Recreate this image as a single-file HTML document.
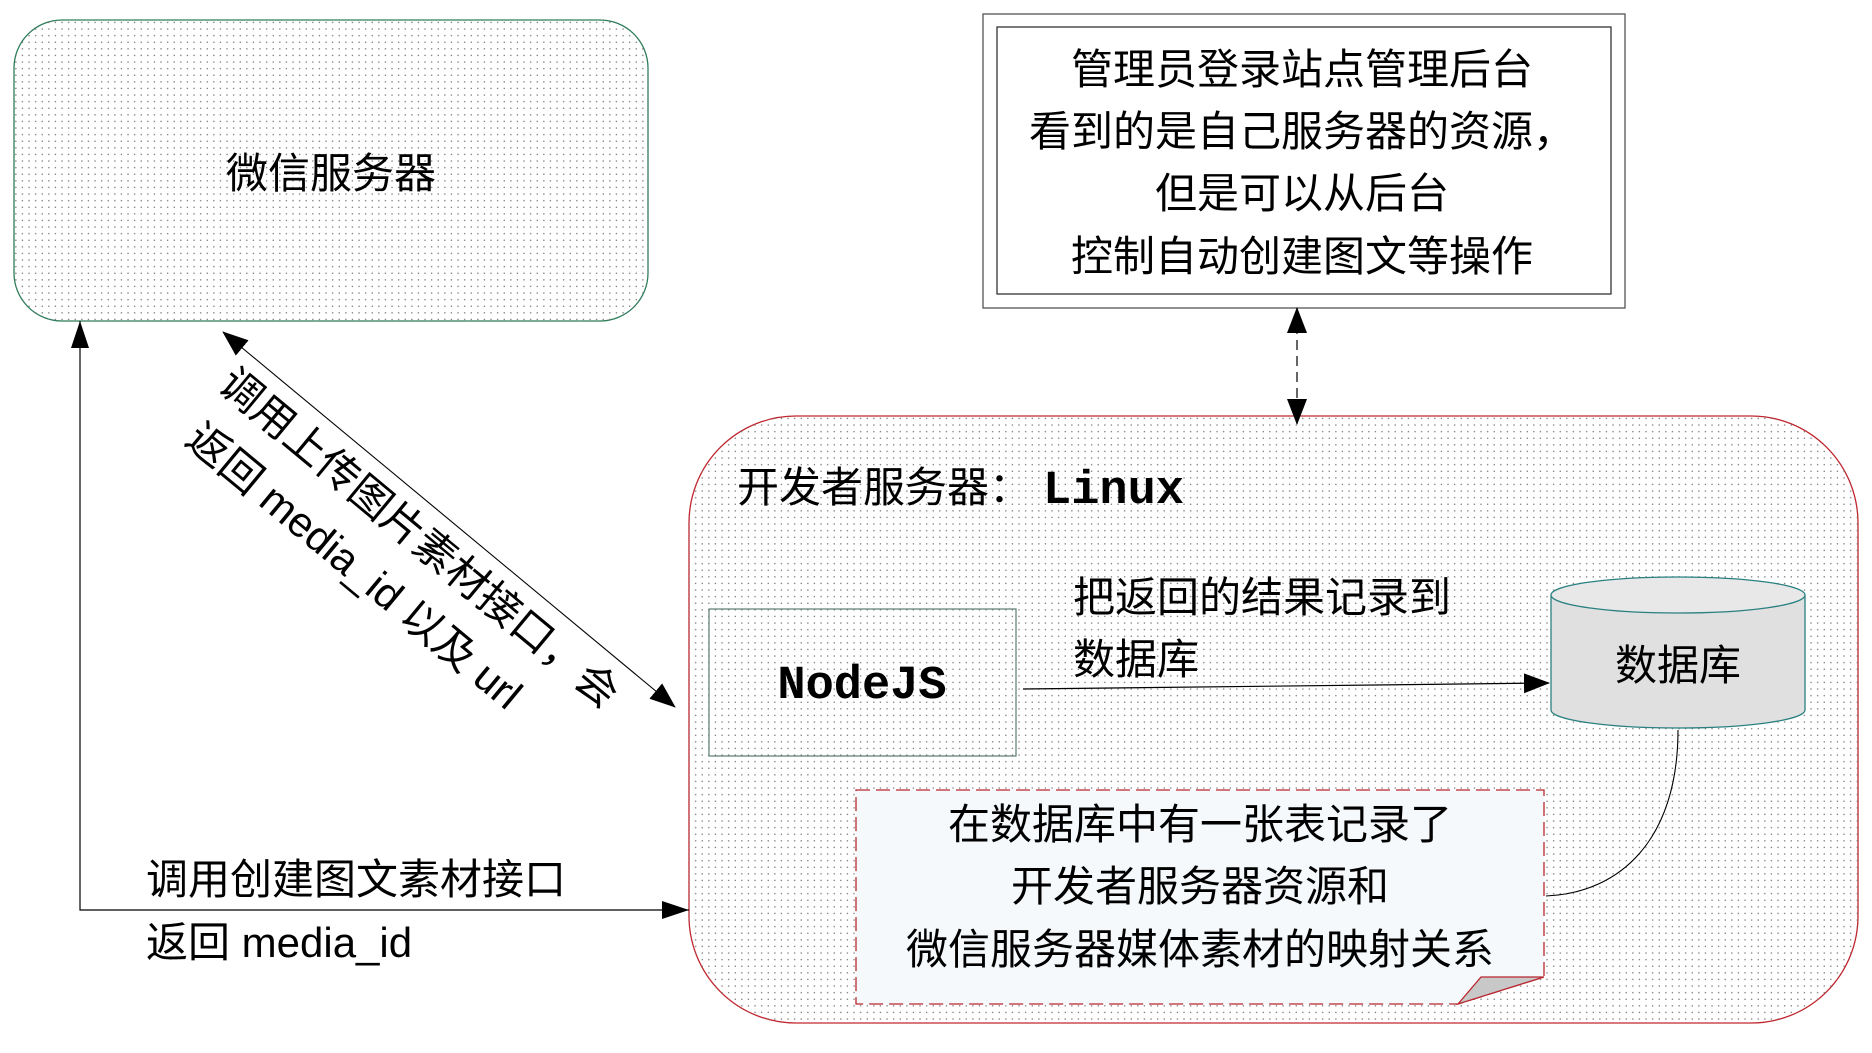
<!DOCTYPE html>
<html><head><meta charset="utf-8"><style>
html,body{margin:0;padding:0;background:#fff;}
svg{display:block;}
text{font-family:"Liberation Sans","Noto Sans CJK SC",sans-serif;fill:#000;}
.m{font-family:"Liberation Mono",monospace;font-weight:bold;}
</style></head><body>
<svg width="1872" height="1053" viewBox="0 0 1872 1053" xmlns="http://www.w3.org/2000/svg">
<defs>
<pattern id="d" width="6.6" height="6.6" patternUnits="userSpaceOnUse">
<rect x="2" y="2" width="1.3" height="1.3" fill="#777"/>
</pattern>
<marker id="b" markerWidth="26" markerHeight="20" refX="25" refY="10" orient="auto-start-reverse" markerUnits="userSpaceOnUse">
<path d="M0,0 L26,10 L0,20 z" fill="#000"/>
</marker>
</defs>

<rect x="14" y="20" width="634" height="301" rx="48" fill="#fff" stroke="#2e7d5b" stroke-width="1.3"/>
<rect x="14" y="20" width="634" height="301" rx="48" fill="url(#d)"/>
<text x="331" y="188" font-size="42" text-anchor="middle">微信服务器</text>

<rect x="983" y="14" width="642" height="294" fill="#fff" stroke="#555" stroke-width="1.3"/>
<rect x="997" y="27" width="614" height="267" fill="none" stroke="#333" stroke-width="1.3"/>
<g font-size="42" text-anchor="middle">
<text x="1302" y="84">管理员登录站点管理后台</text>
<text x="1302" y="146">看到的是自己服务器的资源，</text>
<text x="1302" y="208">但是可以从后台</text>
<text x="1302" y="271">控制自动创建图文等操作</text>
</g>

<rect x="689" y="416" width="1169" height="607" rx="107" fill="#fff" stroke="#c0262e" stroke-width="1.3"/>
<rect x="689" y="416" width="1169" height="607" rx="107" fill="url(#d)"/>
<text x="737" y="502" font-size="42">开发者服务器：</text>
<text x="1043" y="503" font-size="47" class="m">Linux</text>

<line x1="1297" y1="308" x2="1297" y2="424" stroke="#000" stroke-width="1.2" stroke-dasharray="10,6" marker-start="url(#b)" marker-end="url(#b)"/>

<rect x="709" y="609" width="307" height="147" fill="none" stroke="#5a7a6e" stroke-width="1.2"/>
<text x="862" y="698" font-size="47" class="m" text-anchor="middle">NodeJS</text>

<line x1="1023" y1="689" x2="1549" y2="683" stroke="#000" stroke-width="1.2" marker-end="url(#b)"/>
<text x="1073" y="612" font-size="42">把返回的结果记录到</text>
<text x="1073" y="674" font-size="42">数据库</text>

<path d="M1551,595 L1551,710 A127,18 0 0 0 1805,710 L1805,595" fill="#e0e0e0" stroke="#2a8080" stroke-width="1.3"/>
<ellipse cx="1678" cy="595" rx="127" ry="18" fill="#e8e8e8" stroke="#2a8080" stroke-width="1.3"/>
<text x="1678" y="680" font-size="42" text-anchor="middle">数据库</text>

<path d="M1678,730 C1678,840 1620,893 1546,896" fill="none" stroke="#000" stroke-width="1.1"/>

<path d="M856,790 L1544,790 L1544,977 L1458,1004 L856,1004 Z" fill="#f5f9fb" stroke="#b8262e" stroke-width="1.3" stroke-dasharray="14,6"/>
<path d="M1458,1004 L1481,977 L1544,977 Z" fill="#c8c8c8" stroke="#b8262e" stroke-width="1.3"/>
<g font-size="42" text-anchor="middle">
<text x="1200" y="839">在数据库中有一张表记录了</text>
<text x="1200" y="901">开发者服务器资源和</text>
<text x="1200" y="964">微信服务器媒体素材的映射关系</text>
</g>

<polyline points="80,321 80,910 689,910" fill="none" stroke="#000" stroke-width="1.2"/>
<path d="M80,321 L71,348 L89,348 Z" fill="#000"/>
<path d="M689,910 L662,901 L662,919 Z" fill="#000"/>
<text x="146" y="894" font-size="42">调用创建图文素材接口</text>
<text x="146" y="957" font-size="42">返回 media_id</text>

<line x1="223" y1="332" x2="675" y2="707" stroke="#000" stroke-width="1.1" marker-start="url(#b)" marker-end="url(#b)"/>
<g font-size="42" text-anchor="middle">
<text transform="translate(410,549) rotate(39.7)">调用上传图片素材接口，会</text>
<text transform="translate(345,577) rotate(39.7)">返回 media_id 以及 url</text>
</g>
</svg>
</body></html>
